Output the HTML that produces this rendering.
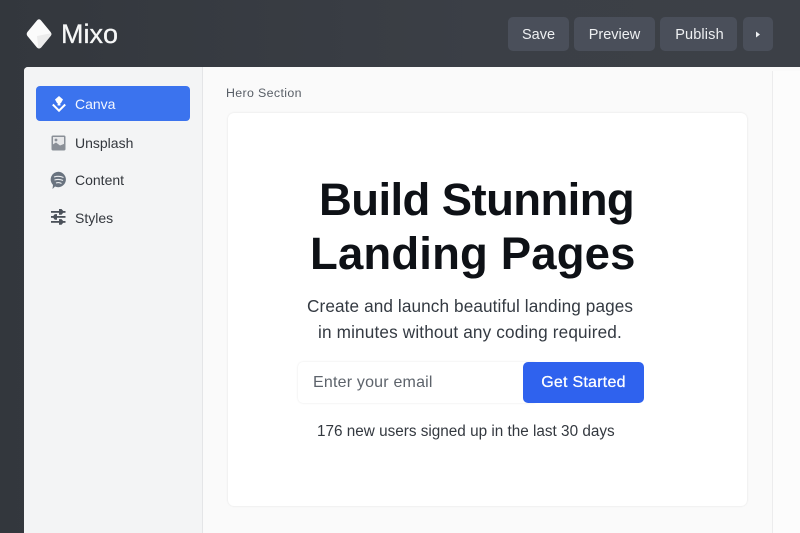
<!DOCTYPE html>
<html><head><meta charset="utf-8">
<style>
*{box-sizing:border-box;margin:0;padding:0}
html,body{width:800px;height:533px;overflow:hidden;background:#383c43;font-family:"Liberation Sans",sans-serif}
.a{position:absolute;white-space:nowrap}
#top{position:absolute;left:0;top:0;width:800px;height:533px;background:linear-gradient(90deg,#33373d,#3b3f46 60%,#3c4047)}
.btn{position:absolute;top:17px;height:34px;background:#4a4f5a;border-radius:5px;color:#eef0f2;font-size:14.5px;line-height:36px;text-align:center}
#app{position:absolute;left:24px;top:67px;width:776px;height:466px;background:#fafafa;border-radius:4px 0 0 0}
#side{position:absolute;left:24px;top:67px;width:179px;height:466px;background:#f3f4f5;border-right:1px solid #e4e5e7;border-radius:4px 0 0 0}
#right{position:absolute;left:772px;top:71px;width:28px;height:462px;background:#fcfcfc;border-left:1px solid #ececed}
#active{position:absolute;left:36px;top:86px;width:154px;height:35px;background:#3b73ee;border-radius:4px}
.nav{position:absolute;left:75px;font-size:14px;color:#33373d;line-height:18px}
#card{position:absolute;left:228px;top:113px;width:519px;height:393px;background:#fff;border-radius:6px;box-shadow:0 0 2px rgba(0,0,0,.1)}
h1{position:absolute;font-size:45.5px;font-weight:700;color:#0e1116;line-height:54px;white-space:nowrap}
.sub{position:absolute;font-size:17.2px;color:#343a42;line-height:26px;white-space:nowrap}
#input{position:absolute;left:298px;top:362px;width:240px;height:41px;background:#fff;border-radius:5px;box-shadow:0 0 2px rgba(0,0,0,.1)}
#go{position:absolute;left:523px;top:362px;width:121px;height:41px;background:#2f62ee;border-radius:5px;color:#fff;font-size:16px;letter-spacing:.25px;text-align:center;line-height:41px;-webkit-text-stroke:.25px #fff}
</style></head><body>
<div id="top"></div>
<svg class="a" style="left:25px;top:18px" width="28" height="32" viewBox="0 0 28 32">
<path d="M14 1.2Q15.3 1.2 16.2 2.6L25.6 14Q27 16 25.6 18L16.2 29.4Q14 31.6 11.8 29.4L2.4 18Q1 16 2.4 14L11.8 2.6Q12.7 1.2 14 1.2Z" fill="#fbfbfb"/>
<path d="M26.2 15.2Q27 16 25.6 18L16.2 29.4Q14.8 30.8 13.4 30.3L12 18Z" fill="#ececec"/>
</svg>
<div class="a" style="left:61px;top:18px;font-size:27px;line-height:32px;color:#f6f7f7;-webkit-text-stroke:.3px #f6f7f7">Mixo</div>
<div class="btn" style="left:508px;width:61px">Save</div>
<div class="btn" style="left:574px;width:81px">Preview</div>
<div class="btn" style="left:660px;width:77px;padding-left:2px;letter-spacing:.15px">Publish</div>
<div class="btn" style="left:743px;width:30px"></div>
<svg class="a" style="left:755px;top:31px" width="6" height="7"><path d="M1 .5L5 3.5L1 6.5Z" fill="#eef0f2"/></svg>
<div id="app"></div><div id="side"></div><div id="right"></div>
<div id="active"></div>
<svg class="a" style="left:50px;top:95px" width="18" height="18" viewBox="0 0 18 18">
<path d="M9 1L13 4.5L11 8H7L5 4.5Z" fill="#fff"/><rect x="7.6" y="7" width="2.8" height="3.5" fill="#fff"/>
<path d="M2.8 9.5L9 15.7L15.2 9.5" fill="none" stroke="#fff" stroke-width="2"/>
</svg>
<div class="nav" style="top:95px;color:#f4f7ff">Canva</div>
<svg class="a" style="left:51px;top:135px" width="15" height="16" viewBox="0 0 15 16">
<rect x=".5" y=".5" width="14" height="15" rx="1.5" fill="#8a8f97"/>
<rect x="2" y="2" width="11" height="11" fill="#e6e7e9"/>
<circle cx="5" cy="5" r="1.4" fill="#8a8f97"/>
<path d="M1 14V10L5 7.5L9 10.5L14 8.5V14Z" fill="#8a8f97"/>
</svg>
<div class="nav" style="top:134px">Unsplash</div>
<svg class="a" style="left:50px;top:171px" width="17" height="19" viewBox="0 0 17 19">
<path d="M8.5 .8A7.7 7.7 0 1 1 5 15.5L2.5 18L3 14A7.7 7.7 0 0 1 8.5 .8Z" fill="#69737f"/>
<path d="M4 6Q9 4.5 13.5 6.5M4.5 9Q9 7.7 13 9.5M6 12Q9 11 11.5 12.5" stroke="#e9ebee" stroke-width="1.1" fill="none"/>
</svg>
<div class="nav" style="top:171px">Content</div>
<svg class="a" style="left:51px;top:209px" width="15" height="16" viewBox="0 0 15 16" fill="#4b515a">
<rect x="0" y="2" width="14.5" height="1.8"/><path d="M8 0H10.5L13 2.9L10.5 5.8H8Z"/>
<rect x="0" y="7" width="14.5" height="1.8"/><path d="M6 5.1H3.8L1.5 7.9L3.8 10.7H6Z"/>
<rect x="0" y="12" width="14.5" height="1.8"/><path d="M8 10.1H10.5L13 12.9L10.5 15.7H8Z"/>
</svg>
<div class="nav" style="top:209px">Styles</div>
<div class="a" style="left:226px;top:85px;font-size:12.4px;letter-spacing:.35px;line-height:16px;color:#585e66">Hero Section</div>
<div id="card"></div>
<h1 style="left:319px;top:173px;letter-spacing:-.6px">Build Stunning</h1>
<h1 style="left:310px;top:227px;letter-spacing:.15px">Landing Pages</h1>
<div class="sub" style="left:307px;top:293px;letter-spacing:.1px">Create and launch beautiful landing pages</div>
<div class="sub" style="left:318px;top:319px;letter-spacing:.15px">in minutes without any coding required.</div>
<div id="input"></div>
<div class="a" style="left:313px;top:373px;font-size:16px;letter-spacing:.2px;line-height:20px;color:#5d636b">Enter your email</div>
<div id="go">Get Started</div>
<div class="a" style="left:317px;top:423px;font-size:15.3px;line-height:18px;color:#33383f">176 new users signed up in the last 30 days</div>
</body></html>
